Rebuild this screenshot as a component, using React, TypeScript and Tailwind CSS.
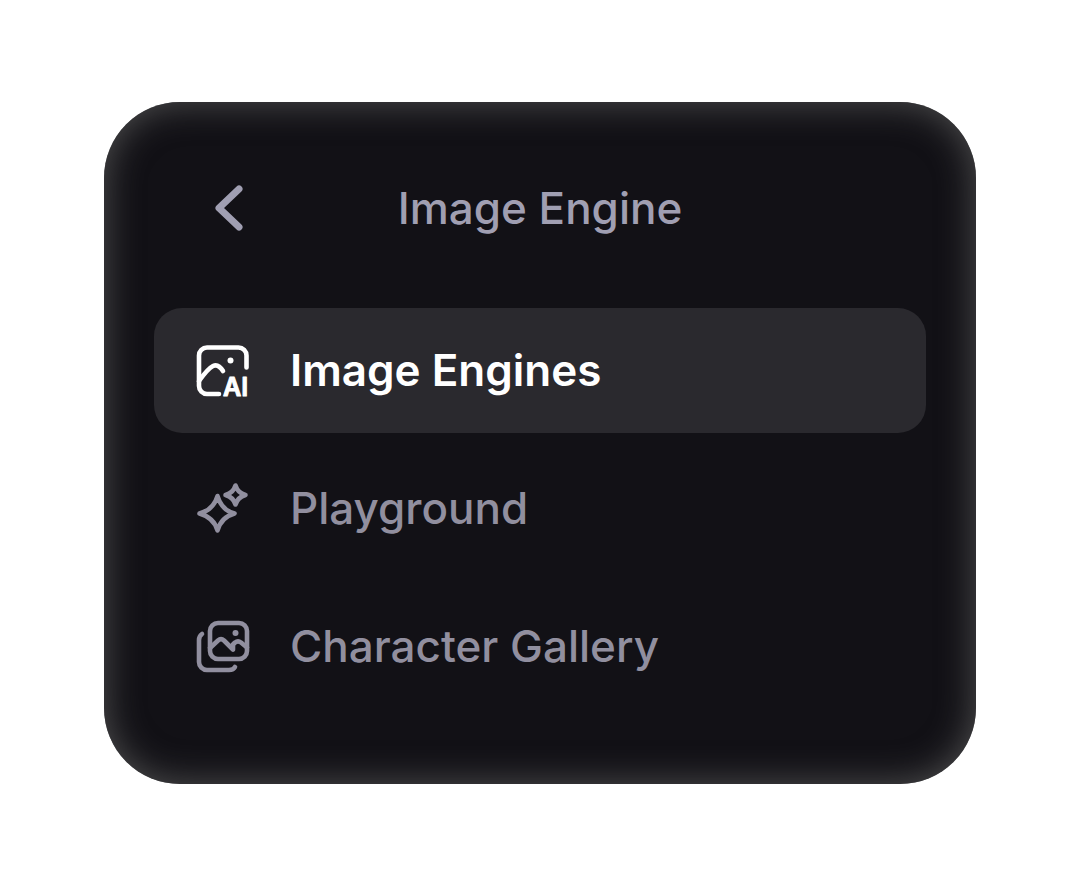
import type { ReactNode } from 'react';

type IconProps = { children: ReactNode };

function Icon({ children }: IconProps) {
  return (
    <svg
      viewBox="0 0 64 64"
      className="size-16 shrink-0"
      fill="none"
      stroke="currentColor"
      strokeWidth="4.600"
      strokeLinecap="round"
      strokeLinejoin="round"
      aria-hidden="true"
    >
      {children}
    </svg>
  );
}

function ImageAiIcon() {
  return (
    <Icon>
      <path d="M56.500 28.500V16.500a8 8 0 0 0-8-8H17a8 8 0 0 0-8 8V47a8 8 0 0 0 8 8h12" />
      <path d="M9 42C14 35 19 29 23 27c4-2 7.500 1 10 5" />
      <circle cx="40.500" cy="21.500" r="3" fill="currentColor" stroke="none" />
      <text
        x="33"
        y="57"
        fill="currentColor"
        strokeWidth="1"
        className="font-['Inter',sans-serif] text-[25px] font-semibold"
      >
        AI
      </text>
    </Icon>
  );
}

function SparklesIcon() {
  return (
    <Icon>
      <path d="M27.500 19c2.500 9 8 15 17 17.500-9 2.500-14.500 8-17 17-2.500-9-9-14.500-18-17 9-2.500 15.500-8.500 18-17.500Z" />
      <path d="M45.500 8.500c1.500 5 4.500 8 10 9.500-5.500 1.500-8.500 4.500-10 9.500-1.500-5-4.500-8-10-9.500 5.500-1.500 8.500-4.500 10-9.500Z" />
    </Icon>
  );
}

function GalleryIcon() {
  return (
    <Icon>
      <rect x="20" y="8" width="37" height="36" rx="8" />
      <path d="M12 19c-2 1.500-3 3-3 6v22a8 8 0 0 0 8 8h22c3 0 5-1 6-3" />
      <path d="M20 33l8-7.500c2-1.800 4-1.800 6 0l9 9v-5l2-2c2-1.500 4-1.500 6 0l6 5" />
      <circle cx="45.500" cy="18" r="3" fill="currentColor" stroke="none" />
    </Icon>
  );
}

const ITEMS = [
  { label: 'Image Engines', icon: <ImageAiIcon />, active: true },
  { label: 'Playground', icon: <SparklesIcon />, active: false },
  { label: 'Character Gallery', icon: <GalleryIcon />, active: false },
];

export default function App() {
  return (
    <main className="min-h-screen bg-white px-[104px] py-[102px] font-['Inter',sans-serif]">
      <nav
        aria-label="Image Engine"
        className="rounded-[76px] bg-[#121116] px-[50px] pt-[74px] pb-[75px] shadow-[inset_0_0_36px_#525252]"
      >
        <header className="grid grid-cols-[64px_1fr_64px] items-center px-[43px] text-[#a09fb2]">
          <button type="button" aria-label="Back" className="size-16">
            <svg
              viewBox="0 0 64 64"
              className="size-16"
              fill="none"
              stroke="currentColor"
              strokeWidth="7"
              strokeLinecap="round"
              strokeLinejoin="round"
              aria-hidden="true"
            >
              <path d="M42 13 22 32l20 19" />
            </svg>
          </button>
          <h1 className="text-center text-[44px] leading-[64px] font-medium">Image Engine</h1>
        </header>

        <ul className="mt-[68px] flex flex-col gap-[13px]">
          {ITEMS.map((item) => (
            <li key={item.label}>
              <a
                href="#"
                aria-current={item.active ? 'page' : undefined}
                className={
                  item.active
                    ? 'flex h-[125px] items-center gap-9 rounded-[28px] bg-[#2a292e] px-9 text-[44px] leading-[64px] font-semibold text-white'
                    : 'flex h-[125px] items-center gap-9 rounded-[28px] px-9 text-[44px] leading-[64px] font-medium text-[#918f9f]'
                }
              >
                {item.icon}
                <span className="pb-0.5">{item.label}</span>
              </a>
            </li>
          ))}
        </ul>
      </nav>
    </main>
  );
}
